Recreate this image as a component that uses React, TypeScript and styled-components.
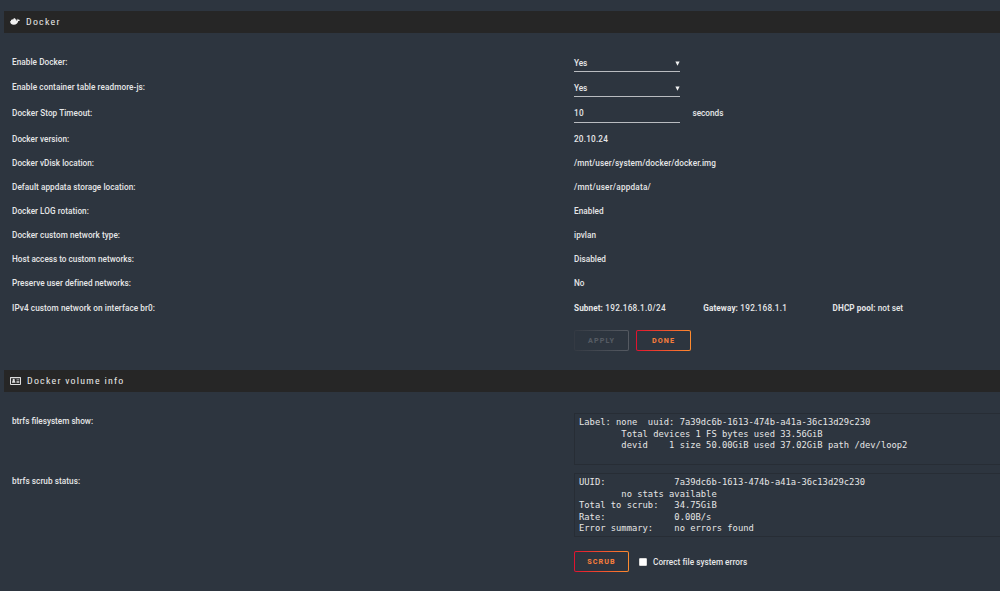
import React from "react";
import styled, { createGlobalStyle } from "styled-components";

const GlobalStyle = createGlobalStyle`
  html, body { margin: 0; padding: 0; background: #2d353f; }
  * { box-sizing: border-box; }
`;

const Page = styled.main`
  width: 1000px;
  height: 591px;
  padding: 11px 0 0 4px;
  overflow: hidden;
  background: #2d353f;
  color: #e6e7e8;
  font-family: Roboto, "Noto Sans", sans-serif;
  font-size: 8.2px;
  font-weight: 500;
  line-height: 12px;
`;

const TitleBar = styled.h2<{ $top?: number }>`
  display: flex;
  align-items: center;
  height: 22px;
  margin: ${(p) => p.$top ?? 0}px 0 0;
  padding: 0 0 0 6px;
  background: #262626;
  color: #e8e8e8;
  font-size: 9.9px;
  font-weight: 400;
  font-stretch: 85%;
  letter-spacing: 1.25px;
`;

const TitleIcon = styled.svg<{ $width: number; $gap: number }>`
  display: block;
  width: ${(p) => p.$width}px;
  height: 10px;
  margin-right: ${(p) => p.$gap}px;
`;

const Fields = styled.dl<{ $top: number }>`
  display: flex;
  flex-direction: column;
  margin: 0;
  padding: ${(p) => p.$top}px 0 0 8px;
`;

const Row = styled.div<{ $height: number }>`
  display: grid;
  grid-template-columns: 562px 1fr;
  height: ${(p) => p.$height}px;
`;

const Label = styled.dt<{ $top?: number; $track?: number }>`
  padding-top: ${(p) => p.$top ?? 0}px;
  letter-spacing: ${(p) => p.$track ?? 0.06}px;
  white-space: nowrap;
`;

const Value = styled.dd<{ $track?: number }>`
  display: flex;
  margin: 0;
  letter-spacing: ${(p) => p.$track ?? 0}px;
  white-space: nowrap;
`;

const Control = styled.div<{ $track?: number; $inset?: number }>`
  display: flex;
  justify-content: space-between;
  width: 106px;
  height: 16px;
  border-bottom: 1px solid #b9bcc0;
  padding-top: ${(p) => p.$inset ?? 1}px;
  letter-spacing: ${(p) => p.$track ?? -0.1}px;
`;

const Caret = styled.svg`
  width: 5px;
  height: 5px;
  margin-top: 3.5px;
`;

const Unit = styled.span`
  margin-left: 12.5px;
  padding-top: 0.4px;
`;

const Network = styled.span<{ $track: number }>`
  flex: 0 0 129.3px;
  letter-spacing: ${(p) => p.$track}px;
  b { font-weight: 700; letter-spacing: 0.1px; }
`;

const Actions = styled.div<{ $top: number }>`
  display: flex;
  align-items: center;
  padding: ${(p) => p.$top}px 0 0 570px;
`;

const Button = styled.button<{ $muted?: boolean }>`
  width: 55px;
  height: 21px;
  margin: 0 7px 0 0;
  padding: 1px 0 0;
  border: 1px solid transparent;
  border-radius: 2px;
  background:
    linear-gradient(#2d353f, #2d353f) padding-box,
    ${(p) => (p.$muted ? "linear-gradient(90deg, #343a43, #555a62)" : "linear-gradient(90deg, #e0122f, #ff8c2f)")} border-box;
  color: ${(p) => (p.$muted ? "#555b63" : "#f47c3c")};
  font: 800 7.2px/12px Roboto, sans-serif;
  letter-spacing: 1.1px;
  text-align: center;
`;

const Output = styled.pre<{ $height: number }>`
  width: 430px;
  height: ${(p) => p.$height}px;
  margin: 0;
  padding: 3px 0 0 4px;
  border: 1px solid #272d35;
  border-right: 0;
  color: #e6e6e6;
  font: 400 8.8px/11.5px "DejaVu Sans Mono", monospace;
`;

const Checkbox = styled.input`
  appearance: none;
  width: 8px;
  height: 8px;
  margin: 1px 6px 0 3px;
  background: #fff;
  border: 1px solid #d9d9d9;
  border-radius: 1px;
`;

const CheckLabel = styled.span`
  padding-top: 1px;
  letter-spacing: 0.04px;
`;

const Select = () => (
  <Control>
    <span>Yes</span>
    <Caret viewBox="0 0 5 5"><path d="M.4.4h4.2L2.5 4.8z" fill="#f2f2f2" /></Caret>
  </Control>
);

const details: { label: string; value: string; labelTrack: number; valueTrack: number }[] = [
  { label: "Docker version:", value: "20.10.24", labelTrack: 0.03, valueTrack: 0.2 },
  { label: "Docker vDisk location:", value: "/mnt/user/system/docker/docker.img", labelTrack: 0.03, valueTrack: 0.1 },
  { label: "Default appdata storage location:", value: "/mnt/user/appdata/", labelTrack: 0.06, valueTrack: 0.22 },
  { label: "Docker LOG rotation:", value: "Enabled", labelTrack: 0.05, valueTrack: 0.05 },
  { label: "Docker custom network type:", value: "ipvlan", labelTrack: 0.05, valueTrack: 0.05 },
  { label: "Host access to custom networks:", value: "Disabled", labelTrack: 0, valueTrack: 0.03 },
  { label: "Preserve user defined networks:", value: "No", labelTrack: 0.03, valueTrack: 0.05 },
];

const filesystem = `Label: none  uuid: 7a39dc6b-1613-474b-a41a-36c13d29c230
        Total devices 1 FS bytes used 33.56GiB
        devid    1 size 50.00GiB used 37.02GiB path /dev/loop2`;

const scrub = `UUID:             7a39dc6b-1613-474b-a41a-36c13d29c230
        no stats available
Total to scrub:   34.75GiB
Rate:             0.00B/s
Error summary:    no errors found`;

export default function App() {
  return (
    <Page>
      <GlobalStyle />
      <TitleBar>
        <TitleIcon viewBox="0 0 10 10" $width={10} $gap={6}>
          <path fill="#f2f2f2" d="M.2 3.900h.8V2.800h1.300V2.300h1.300V1.200h1.600v1.100h1.100v1.300c.9 0 1.400-.3 1.100-1.500l.4-.4c.5.3.8.7.8 1.200.5-.1.9 0 1.200.3-.3.700-.8.900-1.500.900C7.500 6.700 6.200 7.800 3.900 7.800 1.200 7.800 0 6.200.2 3.900z" />
        </TitleIcon>
        Docker
      </TitleBar>
      <Fields $top={23}>
        <Row $height={25}><Label>Enable Docker:</Label><Value><Select /></Value></Row>
        <Row $height={26}><Label $track={0.09}>Enable container table readmore-js:</Label><Value><Select /></Value></Row>
        <Row $height={26}><Label>Docker Stop Timeout:</Label><Value><Control $track={0.25} $inset={0.4}>10</Control><Unit>seconds</Unit></Value></Row>
        {details.map((d, i) => (
          <Row key={d.label} $height={i === details.length - 1 ? 25 : 24}>
            <Label $track={d.labelTrack}>{d.label}</Label>
            <Value $track={d.valueTrack}>{d.value}</Value>
          </Row>
        ))}
        <Row $height={12}>
          <Label $track={0.09}>IPv4 custom network on interface br0:</Label>
          <Value>
            <Network $track={0.28}><b>Subnet:</b> 192.168.1.0/24</Network>
            <Network $track={0.26}><b>Gateway:</b> 192.168.1.1</Network>
            <Network $track={0}><b>DHCP pool:</b> not set</Network>
          </Value>
        </Row>
      </Fields>
      <Actions $top={16}><Button $muted disabled>APPLY</Button><Button>DONE</Button></Actions>
      <TitleBar $top={19}>
        <TitleIcon viewBox="0 0 11 10" $width={11} $gap={6}>
          <path fill="none" stroke="#dedede" d="M.5 1.500h10v7H.5z" />
          <path fill="#dedede" d="M.5 1h10v1.300H.5zM2 6.800c0-1.400.5-1.800 1-1.800a1.200 1.200 0 1 1 1.400 0c.6 0 1 .5 1 1.800zM6.500 3.500h2.800v.8H6.500zM6.500 5h2.800v.7H6.500zM6.500 6.300h2.800V7H6.500z" />
        </TitleIcon>
        Docker volume info
      </TitleBar>
      <Fields $top={21}>
        <Row $height={60}><Label $top={2} $track={0}>btrfs filesystem show:</Label><Value><Output $height={52}>{filesystem}</Output></Value></Row>
        <Row $height={64}><Label $top={2}>btrfs scrub status:</Label><Value><Output $height={64}>{scrub}</Output></Value></Row>
      </Fields>
      <Actions $top={14}>
        <Button>SCRUB</Button><Checkbox type="checkbox" aria-label="Correct file system errors" /><CheckLabel>Correct file system errors</CheckLabel>
      </Actions>
    </Page>
  );
}
